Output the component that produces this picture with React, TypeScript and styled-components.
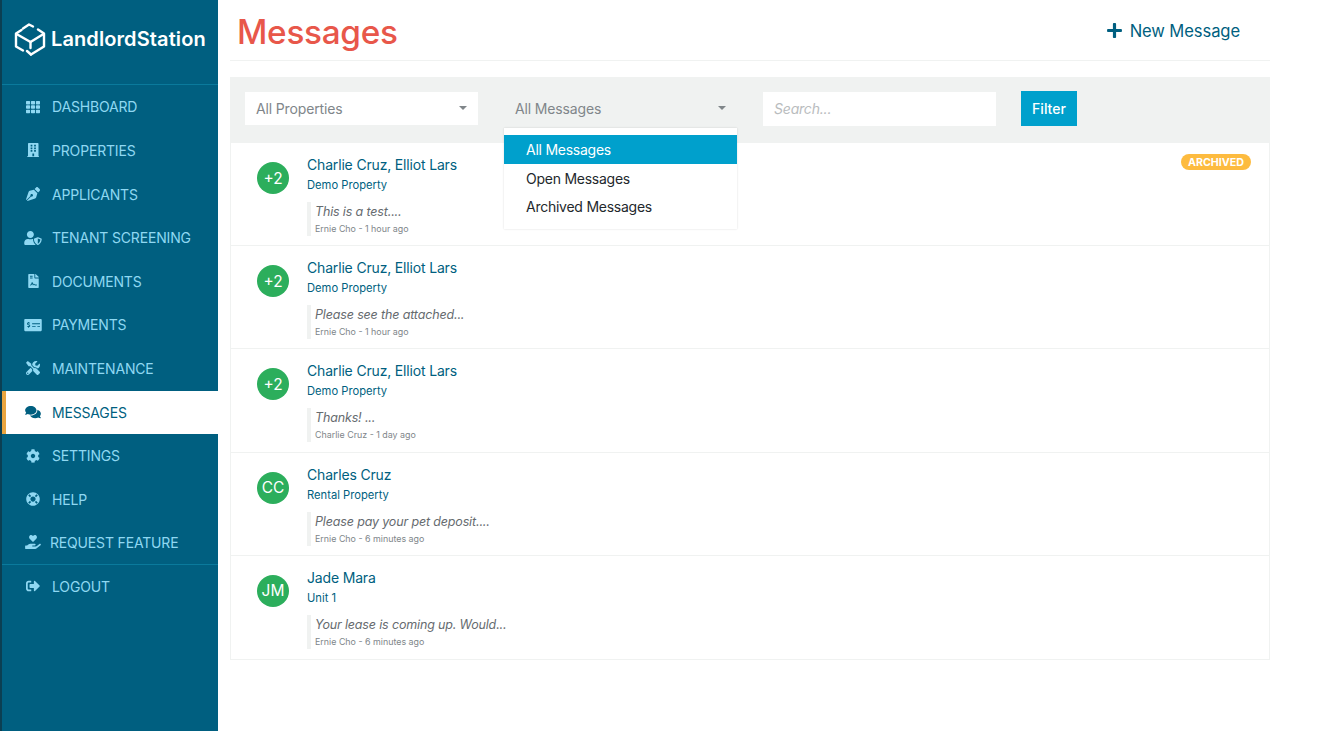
import React from 'react';
import styled, { createGlobalStyle } from 'styled-components';
import {
  FaCog,
  FaComments,
  FaFileContract,
  FaHandHoldingHeart,
  FaLifeRing,
  FaMoneyCheckAlt,
  FaPenNib,
  FaPlus,
  FaBuilding,
  FaSignOutAlt,
  FaTh,
  FaTools,
  FaUserShield,
} from 'react-icons/fa';

const GlobalStyle = createGlobalStyle`
  html, body {
    margin: 0;
    padding: 0;
    background: #fff;
    font-family: Inter, "Liberation Sans", sans-serif;
  }
  * {
    box-sizing: border-box;
  }
`;

const Page = styled.div`
  display: flex;
  width: 1337px;
  height: 731px;
  overflow: hidden;
`;

const Sidebar = styled.aside`
  width: 218px;
  flex-shrink: 0;
  background: #005f80;
  border-left: 2px solid #0b3f52;
`;

const Brand = styled.div`
  display: flex;
  align-items: center;
  gap: 5px;
  height: 85px;
  padding: 0 0 6px 12px;
  border-bottom: 1px solid #0a7a9c;
  color: #fff;
  font-size: 20px;
  font-weight: 600;
  letter-spacing: 0.1px;
`;

const NavGroup = styled.nav<{ $divided?: boolean }>`
  padding-top: ${(p) => (p.$divided ? '0.4px' : '0')};
  border-bottom: ${(p) => (p.$divided ? '1px solid #0a7a9c' : 'none')};
`;

const NavItem = styled.a<{ $active?: boolean; $tight?: boolean }>`
  display: flex;
  align-items: center;
  height: ${(p) => (p.$tight ? '42.6px' : '43.6px')};
  padding-left: ${(p) => (p.$active ? '18px' : '22px')};
  padding-bottom: 0.6px;
  gap: ${(p) => (p.$tight ? '8px' : '10px')};
  border-left: ${(p) => (p.$active ? '4px solid #e9a540' : 'none')};
  background: ${(p) => (p.$active ? '#fff' : 'transparent')};
  color: ${(p) => (p.$active ? '#005f80' : '#8fd8f2')};
  font-size: 14px;
  letter-spacing: -0.17px;
`;

const NavIcon = styled.span<{ $width: number }>`
  display: flex;
  justify-content: center;
  align-items: center;
  width: 18px;

  svg {
    width: ${(p) => p.$width}px;
    height: 14px;
    flex-shrink: 0;
  }
`;

const Main = styled.main`
  width: 1040px;
  margin-left: 12px;
`;

const TitleBar = styled.header`
  display: flex;
  justify-content: space-between;
  align-items: center;
  height: 61px;
  padding: 3px 30px 0 7px;
  border-bottom: 1px solid #f0f2f1;
`;

const Title = styled.h1`
  margin: 0;
  color: #e8574a;
  font-size: 33.3px;
  font-weight: 500;
  letter-spacing: -0.28px;
`;

const NewMessage = styled.a`
  display: flex;
  align-items: center;
  gap: 7px;
  margin-top: -2px;
  color: #005f80;
  font-size: 16.6px;
  letter-spacing: -0.1px;
`;

const FilterBar = styled.div`
  display: flex;
  align-items: center;
  height: 66px;
  margin-top: 16px;
  padding: 0 15px 3px;
  background: #f0f2f1;
`;

const SelectBox = styled.div<{ $open?: boolean }>`
  position: relative;
  display: flex;
  justify-content: space-between;
  align-items: center;
  width: 233px;
  height: 33px;
  margin-right: 26px;
  padding: 0 11px;
  background: ${(p) => (p.$open ? 'transparent' : '#fff')};
  color: #80868a;
  font-size: 14px;
  letter-spacing: -0.14px;
`;

const Caret = styled.span`
  width: 0;
  height: 0;
  margin-bottom: 2px;
  border-left: 4px solid transparent;
  border-right: 4px solid transparent;
  border-top: 4px solid #80868a;
`;

const Menu = styled.ul`
  position: absolute;
  z-index: 2;
  top: 36px;
  left: 0;
  width: 233px;
  margin: 0;
  padding: 7px 0 8px;
  list-style: none;
  background: #fff;
  box-shadow: 0 0 2px rgba(0, 0, 0, 0.14);
  color: #23282c;
`;

const MenuItem = styled.li<{ $selected?: boolean }>`
  display: flex;
  align-items: center;
  height: ${(p) => (p.$selected ? '29px' : '28.5px')};
  padding-left: 22px;
  background: ${(p) => (p.$selected ? '#00a0cc' : 'transparent')};
  color: ${(p) => (p.$selected ? '#fff' : '#23282c')};
  font-size: 14px;
  letter-spacing: -0.25px;
`;

const SearchBox = styled.div`
  display: flex;
  align-items: center;
  width: 233px;
  height: 34px;
  padding: 0 11px;
  background: #fff;
  color: #b9bcbe;
  font-size: 14px;
  font-style: italic;
  letter-spacing: -0.2px;
`;

const FilterButton = styled.button`
  width: 56px;
  height: 35px;
  margin-left: 25px;
  padding: 0;
  border: none;
  background: #00a0cc;
  color: #fff;
  font-family: inherit;
  font-size: 14px;
  font-weight: 500;
`;

const List = styled.div`
  border: 1px solid #f0f2f1;
  border-top: none;
`;

const Row = styled.article`
  position: relative;
  display: flex;
  height: 103.2px;
  padding: 19px 0 0 26px;
  border-bottom: 1px solid #f0f2f1;

  &:last-child {
    border-bottom: none;
  }
`;

const Avatar = styled.div`
  display: flex;
  justify-content: center;
  align-items: center;
  flex-shrink: 0;
  width: 32px;
  height: 32px;
  border-radius: 50%;
  background: #2cae5c;
  color: #fff;
  font-size: 15.5px;
`;

const RowBody = styled.div`
  margin-left: 18px;
`;

const Names = styled.div`
  height: 19px;
  margin-top: -7px;
  color: #005f80;
  font-size: 14px;
  line-height: 19px;
  letter-spacing: -0.17px;
`;

const PropertyName = styled.div`
  margin-top: 4px;
  color: #005f80;
  font-size: 11.2px;
  line-height: 14px;
`;

const Quote = styled.div`
  margin-top: 10px;
  padding: 2px 0 0 4px;
  border-left: 4px solid #f0f2f1;
`;

const Excerpt = styled.div`
  color: #666b6f;
  font-size: 12.5px;
  font-style: italic;
  line-height: 16px;
  letter-spacing: -0.15px;
`;

const Meta = styled.div`
  margin-top: 2px;
  color: #80868a;
  font-size: 8.9px;
  line-height: 14px;
`;

const Badge = styled.span`
  position: absolute;
  top: 11px;
  right: 18px;
  height: 16px;
  padding: 0 7px;
  border-radius: 8px;
  background: #fdbb3f;
  color: #fff;
  font-size: 10.7px;
  font-weight: 700;
  line-height: 17px;
`;

const LogoMark = () => (
  <svg width="32" height="34" viewBox="0 0 32 34" fill="none" stroke="#fff" strokeWidth="2.4" strokeLinecap="round" strokeLinejoin="round">
    <path d="M9 6.5 15 2.5l4 2" />
    <path d="M7.5 8 2 11.5v13l7 4" />
    <path d="M24 7.5l6 4v13l-13 8" />
    <path d="M2.5 12l14 8 13-8" />
    <path d="M16.5 20v6" />
    <path d="M13 29l4 3.5" />
  </svg>
);

const primaryNav = [
  { label: 'DASHBOARD', icon: <FaTh />, iconWidth: 14 },
  { label: 'PROPERTIES', icon: <FaBuilding />, iconWidth: 12.5 },
  { label: 'APPLICANTS', icon: <FaPenNib />, iconWidth: 14 },
  { label: 'TENANT SCREENING', icon: <FaUserShield />, iconWidth: 18 },
  { label: 'DOCUMENTS', icon: <FaFileContract />, iconWidth: 11 },
  { label: 'PAYMENTS', icon: <FaMoneyCheckAlt />, iconWidth: 18 },
  { label: 'MAINTENANCE', icon: <FaTools />, iconWidth: 14 },
  { label: 'MESSAGES', icon: <FaComments />, iconWidth: 18, active: true },
  { label: 'SETTINGS', icon: <FaCog />, iconWidth: 14 },
  { label: 'HELP', icon: <FaLifeRing />, iconWidth: 14 },
  { label: 'REQUEST FEATURE', icon: <FaHandHoldingHeart />, iconWidth: 16, tight: true },
];

const messages = [
  { initials: '+2', names: 'Charlie Cruz, Elliot Lars', property: 'Demo Property', excerpt: 'This is a test....', meta: 'Ernie Cho - 1 hour ago', archived: true },
  { initials: '+2', names: 'Charlie Cruz, Elliot Lars', property: 'Demo Property', excerpt: 'Please see the attached...', meta: 'Ernie Cho - 1 hour ago' },
  { initials: '+2', names: 'Charlie Cruz, Elliot Lars', property: 'Demo Property', excerpt: 'Thanks! ...', meta: 'Charlie Cruz - 1 day ago' },
  { initials: 'CC', names: 'Charles Cruz', property: 'Rental Property', excerpt: 'Please pay your pet deposit....', meta: 'Ernie Cho - 6 minutes ago' },
  { initials: 'JM', names: 'Jade Mara', property: 'Unit 1', excerpt: 'Your lease is coming up. Would...', meta: 'Ernie Cho - 6 minutes ago' },
];

function App(): JSX.Element {
  return (
    <Page>
      <GlobalStyle />
      <Sidebar>
        <Brand>
          <LogoMark />
          LandlordStation
        </Brand>
        <NavGroup $divided>
          {primaryNav.map((item) => (
            <NavItem key={item.label} $active={item.active} $tight={item.tight}>
              <NavIcon $width={item.iconWidth}>{item.icon}</NavIcon>
              {item.label}
            </NavItem>
          ))}
        </NavGroup>
        <NavGroup>
          <NavItem>
            <NavIcon $width={14}>
              <FaSignOutAlt />
            </NavIcon>
            LOGOUT
          </NavItem>
        </NavGroup>
      </Sidebar>
      <Main>
        <TitleBar>
          <Title>Messages</Title>
          <NewMessage>
            <FaPlus size={17} />
            New Message
          </NewMessage>
        </TitleBar>
        <FilterBar>
          <SelectBox>
            All Properties
            <Caret />
          </SelectBox>
          <SelectBox $open>
            All Messages
            <Caret />
            <Menu>
              <MenuItem $selected>All Messages</MenuItem>
              <MenuItem>Open Messages</MenuItem>
              <MenuItem>Archived Messages</MenuItem>
            </Menu>
          </SelectBox>
          <SearchBox>Search...</SearchBox>
          <FilterButton>Filter</FilterButton>
        </FilterBar>
        <List>
          {messages.map((message, index) => (
            <Row key={index}>
              <Avatar>{message.initials}</Avatar>
              <RowBody>
                <Names>{message.names}</Names>
                <PropertyName>{message.property}</PropertyName>
                <Quote>
                  <Excerpt>{message.excerpt}</Excerpt>
                  <Meta>{message.meta}</Meta>
                </Quote>
              </RowBody>
              {message.archived && <Badge>ARCHIVED</Badge>}
            </Row>
          ))}
        </List>
      </Main>
    </Page>
  );
}

export default App;
